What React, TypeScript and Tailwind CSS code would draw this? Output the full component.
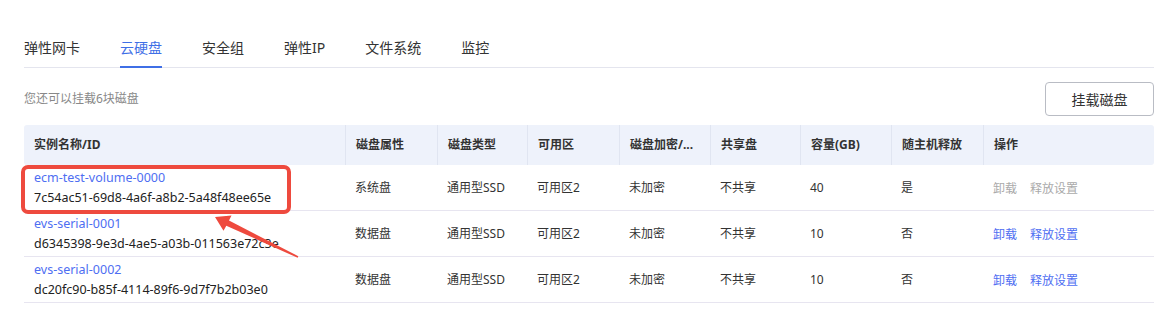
import { useState } from 'react';

const tabs = ['弹性网卡', '云硬盘', '安全组', '弹性IP', '文件系统', '监控'];

const cols = ['实例名称/ID', '磁盘属性', '磁盘类型', '可用区', '磁盘加密/...', '共享盘', '容量(GB)', '随主机释放', '操作'];

const disks = [
  { name: 'ecm-test-volume-0000', id: '7c54ac51-69d8-4a6f-a8b2-5a48f48ee65e', attr: '系统盘', size: '40', release: '是', locked: true },
  { name: 'evs-serial-0001', id: 'd6345398-9e3d-4ae5-a03b-011563e72c3e', attr: '数据盘', size: '10', release: '否', locked: false },
  { name: 'evs-serial-0002', id: 'dc20fc90-b85f-4114-89f6-9d7f7b2b03e0', attr: '数据盘', size: '10', release: '否', locked: false },
];

const grid = 'grid grid-cols-[321px_92px_90px_92px_91px_90px_91px_92px_171px]';

export default function App() {
  const [active, setActive] = useState(1);

  return (
    <div className="relative w-[1174px] h-[335px] bg-white pl-6 pr-5 pt-[37px] text-[#333] font-['Noto_Sans','Noto_Sans_CJK_SC',sans-serif]">
      {/* tabs */}
      <div className="flex gap-10 border-b border-[#e4e5ee]">
        {tabs.map((t, i) => (
          <button
            key={t}
            onClick={() => setActive(i)}
            className={`relative pb-2 text-[14px] leading-[22px] ${i === active ? 'text-[#3f6fe6]' : 'text-[#333]'}`}
          >
            {t}
            {i === active && <span className="absolute left-0 right-0 -bottom-px h-[2px] bg-[#3f6fe6]" />}
          </button>
        ))}
      </div>

      <div className="mt-[14px] flex items-center justify-between">
        <span className="text-[12px] text-[#888]">您还可以挂载6块磁盘</span>
        <button className="h-[34px] w-[109px] rounded-[4px] border border-[#b9bcc4] text-[14px] text-[#333]">挂载磁盘</button>
      </div>

      {/* disk table */}
      <div className="relative mt-[9px] text-[12px]">
        <div className={`${grid} h-10 items-stretch rounded-[3px] bg-[#eef2fb] font-bold text-[#333]`}>
          {cols.map((c, i) => (
            <div key={c} className={`flex items-center px-[10px] whitespace-nowrap ${i > 0 ? 'border-l border-[#e0e5f1]' : ''}`}>
              {c}
            </div>
          ))}
        </div>

        {disks.map((d) => (
          <div key={d.id} className={`${grid} h-[46px] items-center border-b border-[#e7e5f0]`}>
            <div className="px-[10px] text-[12.5px] leading-5">
              <div className="text-[#4e6ef2]">{d.name}</div>
              <div className="text-[#222]">{d.id}</div>
            </div>
            <div className="px-[10px]">{d.attr}</div>
            <div className="px-[10px]">通用型SSD</div>
            <div className="px-[10px]">可用区2</div>
            <div className="px-[10px]">未加密</div>
            <div className="px-[10px]">不共享</div>
            <div className="px-[10px]">{d.size}</div>
            <div className="px-[10px]">{d.release}</div>
            <div className={`flex gap-[13px] px-[10px] pt-[3px] ${d.locked ? 'text-[#aaa]' : 'text-[#4e6ef2]'}`}>
              <span>卸载</span>
              <span>释放设置</span>
            </div>
          </div>
        ))}

        {/* annotation box */}
        <div className="pointer-events-none absolute left-[-3px] top-10 h-[49px] w-[270px] rounded-[7px] border-4 border-[#ee4a3e]" />
      </div>

      {/* annotation arrow */}
      <svg className="pointer-events-none absolute left-0 top-0" width="1174" height="335">
        <polygon
          points="215,217 231.5,215.5 229,220.5 298.3,256.2 297.7,257.8 226.3,225.8 223.5,230.8"
          fill="#ee4a3e"
        />
      </svg>
    </div>
  );
}
